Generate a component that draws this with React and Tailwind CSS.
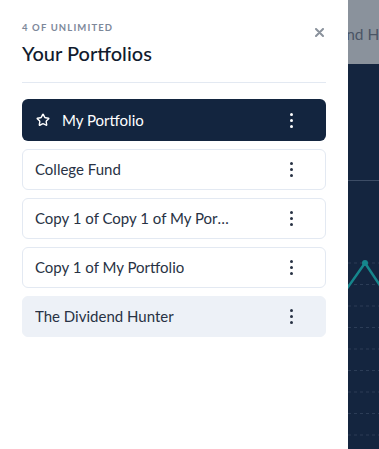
import { Star } from 'lucide-react';

const portfolios = [
  { name: 'College Fund' },
  { name: 'Copy 1 of Copy 1 of My Portfolio' },
  { name: 'Copy 1 of My Portfolio' },
  { name: 'The Dividend Hunter', hover: true },
];

function Kebab({ className }) {
  return (
    <div className={`flex flex-col items-center gap-[3px] ${className}`}>
      <span className="block h-[3px] w-[3px] rounded-full bg-current" />
      <span className="block h-[3px] w-[3px] rounded-full bg-current" />
      <span className="block h-[3px] w-[3px] rounded-full bg-current" />
    </div>
  );
}

function Backdrop() {
  const dashes = [263, 284.5, 306, 327.5, 349, 370.5, 392, 413.5, 435];
  return (
    <div className="flex flex-1 flex-col overflow-hidden">
      <div className="h-[64px] shrink-0 overflow-hidden bg-[#8a929c]">
        <p className="ml-[-10px] mt-[23px] whitespace-nowrap text-[15.5px] text-[#4b5565]">
          end Hunter
        </p>
      </div>
      <div className="flex-1 bg-[#14253f]">
        <svg width="31" height="385" viewBox="0 64 31 385" className="block">
          <line x1="0" y1="180.5" x2="31" y2="180.5" stroke="#3d4d66" strokeWidth="1" />
          {dashes.map((y) => (
            <line
              key={y}
              x1="0"
              y1={y}
              x2="31"
              y2={y}
              stroke="#2c3d57"
              strokeWidth="1"
              strokeDasharray="3 3"
            />
          ))}
          <polyline
            points="-2,290 17,263 33,287"
            fill="none"
            stroke="#16868c"
            strokeWidth="2.5"
          />
          <circle cx="17" cy="263" r="3" fill="#16868c" />
        </svg>
      </div>
    </div>
  );
}

export default function App() {
  return (
    <div
      className="flex h-[449px] w-[379px] overflow-hidden bg-white"
      style={{ fontFamily: 'Lato, "Open Sans", sans-serif' }}
    >
      <aside className="w-[348px] shrink-0 bg-white px-[22px] pt-[22px]">
        {/* Header */}
        <div className="flex items-start justify-between">
          <div>
            <p className="text-[9.5px] font-bold uppercase leading-[12px] tracking-[0.12em] text-[#7d889a]">
              4 of Unlimited
            </p>
            <h2 className="mt-[7px] text-[20px] font-medium leading-[25px] text-[#111b2e]">
              Your Portfolios
            </h2>
          </div>
          <button className="mr-[2px] mt-[6px] text-[#8a929c]" aria-label="Close">
            <svg width="9" height="9" viewBox="0 0 9 9" className="block">
              <path d="M1 1l7 7M8 1L1 8" stroke="currentColor" strokeWidth="2" strokeLinecap="round" />
            </svg>
          </button>
        </div>

        <div className="mt-[16px] h-px bg-[#e3e9f2]" />

        {/* List */}
        <ul className="mt-[16px] flex flex-col gap-[8px]">
          <li className="flex h-[42px] items-center rounded-[6px] bg-[#13253f] pl-[14px] pr-[33px] text-white">
            <Star className="h-[14px] w-[14px]" strokeWidth={2.4} />
            <span className="ml-[12px] text-[15px]">My Portfolio</span>
            <Kebab className="ml-auto text-white" />
          </li>
          {portfolios.map((p) => (
            <li
              key={p.name}
              className={`flex h-[41px] items-center rounded-[6px] border pl-[12px] pr-[32px] text-[#283244] ${
                p.hover ? 'border-[#edf1f7] bg-[#edf1f7]' : 'border-[#e3e9f2] bg-white'
              }`}
            >
              <span className="max-w-[196px] truncate text-[15px]">{p.name}</span>
              <Kebab className="ml-auto text-[#283244]" />
            </li>
          ))}
        </ul>
      </aside>
      <Backdrop />
    </div>
  );
}
